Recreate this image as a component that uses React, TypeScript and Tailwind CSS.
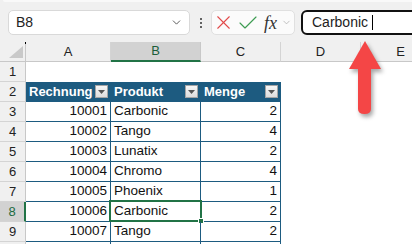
import React from "react";
import { ChevronDown, X, Check } from "lucide-react";

const rows = [
  { n: 3, a: "10001", b: "Carbonic", c: "2" },
  { n: 4, a: "10002", b: "Tango", c: "4" },
  { n: 5, a: "10003", b: "Lunatix", c: "2" },
  { n: 6, a: "10004", b: "Chromo", c: "4" },
  { n: 7, a: "10005", b: "Phoenix", c: "1" },
  { n: 8, a: "10006", b: "Carbonic", c: "2" },
  { n: 9, a: "10007", b: "Tango", c: "2" },
];

function FilterBtn() {
  return (
    <div className="w-[13px] h-[13px] mr-[2px] shrink-0 flex items-center justify-center border border-[#a5a5a5] bg-gradient-to-b from-[#f6f6f6] to-[#dedede]">
      <svg width="7" height="4" viewBox="0 0 7 4">
        <path d="M0 0 L7 0 L3.5 4 Z" fill="#555" />
      </svg>
    </div>
  );
}

function RowHeader({ n, selected }: { n?: number; selected?: boolean }) {
  return (
    <div
      className={
        "w-[26px] h-[20px] shrink-0 box-border flex items-center justify-center text-[13px] border-b border-b-[#d4d4d4] " +
        (selected
          ? "bg-[#d2d2d2] text-[#1b6b3f] border-r-2 border-r-[#217346]"
          : "bg-[#f0f0f0] text-[#222] border-r border-r-[#c8c8c8]")
      }
    >
      {n}
    </div>
  );
}

export default function App() {
  return (
    <div className="w-[412px] h-[244px] overflow-hidden bg-white relative font-['Liberation_Sans',Arial,sans-serif] text-[#111]">
      {/* Toolbar */}
      <div className="h-[42px] bg-[#f0f0f0] relative overflow-hidden">
        <div className="h-[2px] ml-[3px] bg-[#f9f9f9] rounded-bl-[4px]" />
        <div className="flex items-start pt-[8px] pl-[8px]">
          <div className="w-[182px] h-[25px] shrink-0 box-border bg-white border border-[#d9d9d9] rounded-[5px] flex items-center justify-between pl-[7px] pr-[6px]">
            <span className="text-[14px] text-[#222]">B8</span>
            <ChevronDown size={13} strokeWidth={1.6} color="#444" />
          </div>
          <div className="w-[21px] h-[25px] shrink-0 flex flex-col items-center justify-center gap-[2px]">
            <div className="w-[2px] h-[2px] bg-[#333] rounded-full" />
            <div className="w-[2px] h-[2px] bg-[#333] rounded-full" />
            <div className="w-[2px] h-[2px] bg-[#333] rounded-full" />
          </div>
          <div className="w-[84px] h-[25px] shrink-0 box-border bg-[#fbfbfb] border border-[#e0e0e0] rounded-[5px] flex items-center">
            <X size={23} strokeWidth={1.15} color="#e24a4a" className="shrink-0" />
            <Check size={24} strokeWidth={1.15} color="#3d9c52" className="ml-[1px] shrink-0" />
            <span className="ml-[4px] text-[18px] italic font-['Liberation_Serif',serif] text-[#333] leading-none">
              fx
            </span>
            <ChevronDown size={11} strokeWidth={1.5} color="#a8a8a8" className="ml-[4px] shrink-0" />
          </div>
          <div className="ml-[6px] w-[140px] h-[25px] box-border bg-white border-2 border-[#111] rounded-[6px] flex items-center pl-[9px] shrink-0">
            <span className="text-[14px] text-[#222]">Carbonic</span>
            <div className="w-[1px] h-[15px] bg-black ml-[4px]" />
          </div>
        </div>
      </div>

      {/* Column headers */}
      <div className="flex h-[20px] bg-[#f0f0f0] text-[13px] text-[#222]">
        <div className="w-[26px] shrink-0 box-border border-r border-r-[#c8c8c8] border-b border-b-[#c8c8c8] relative">
          <svg className="absolute left-[9px] top-[4px]" width="14" height="12" viewBox="0 0 14 12">
            <path d="M14 0 L14 12 L0 12 Z" fill="#c9c9c9" />
          </svg>
          <div className="absolute right-[-1px] top-0 w-[1px] h-[2px] bg-black" />
        </div>
        <div className="w-[85px] shrink-0 box-border border-r border-r-[#d4d4d4] border-b border-b-[#c8c8c8] flex items-center justify-center">A</div>
        <div className="w-[90px] shrink-0 box-border bg-[#d2d2d2] border-r border-r-[#c8c8c8] border-b-2 border-b-[#217346] flex items-center justify-center text-[#1b5e3a]">B</div>
        <div className="w-[80px] shrink-0 box-border border-r border-r-[#d4d4d4] border-b border-b-[#c8c8c8] flex items-center justify-center">C</div>
        <div className="w-[80px] shrink-0 box-border border-r border-r-[#d4d4d4] border-b border-b-[#c8c8c8] flex items-center justify-center">D</div>
        <div className="w-[80px] shrink-0 box-border border-r border-r-[#d4d4d4] border-b border-b-[#c8c8c8] flex items-center justify-center">E</div>
      </div>

      {/* Row 1 */}
      <div className="flex h-[20px]">
        <RowHeader n={1} />
        <div className="flex-1" />
      </div>

      {/* Row 2: table header */}
      <div className="flex h-[20px] text-[13px]">
        <RowHeader n={2} />
        <div className="w-[85px] shrink-0 box-border bg-[#1d5b80] border-r border-r-[#1d5b80] border-b border-b-[#1d5b80] flex items-center justify-between pl-[3px] text-white font-bold">
          <span>Rechnung</span>
          <FilterBtn />
        </div>
        <div className="w-[90px] shrink-0 box-border bg-[#1d5b80] border-r border-r-[#1d5b80] border-b border-b-[#1d5b80] flex items-center justify-between pl-[3px] text-white font-bold">
          <span>Produkt</span>
          <FilterBtn />
        </div>
        <div className="w-[80px] shrink-0 box-border bg-[#1d5b80] border-r border-r-[#1d5b80] border-b border-b-[#1d5b80] flex items-center justify-between pl-[3px] text-white font-bold">
          <span>Menge</span>
          <FilterBtn />
        </div>
      </div>

      {rows.map((r) => {
        const sel = r.n === 8;
        return (
          <div key={r.n} className="flex h-[20px] text-[13.5px] text-[#111]">
            <RowHeader n={r.n} selected={sel} />
            <div className="w-[85px] shrink-0 box-border border-r border-b border-[#1d5b80] flex items-center justify-end pr-[3px]">
              {r.a}
            </div>
            <div className="w-[90px] shrink-0 box-border border-r border-b border-[#1d5b80] flex items-center pl-[3px] relative">
              {r.b}
              {sel && (
                <>
                  <div className="absolute left-[-2px] top-[-2px] right-[-2px] bottom-[-1px] border-2 border-[#217346]" />
                  <div className="absolute right-[-4px] bottom-[-3px] w-[6px] h-[6px] bg-[#217346] border border-white" />
                </>
              )}
            </div>
            <div className="w-[80px] shrink-0 box-border border-r border-b border-[#1d5b80] flex items-center justify-end pr-[3px]">
              {r.c}
            </div>
          </div>
        );
      })}

      {/* Row 10 (mostly off-screen) */}
      <div className="flex h-[20px]">
        <RowHeader />
        <div className="w-[85px] shrink-0 box-border border-r border-[#1d5b80]" />
        <div className="w-[90px] shrink-0 box-border border-r border-[#1d5b80]" />
        <div className="w-[80px] shrink-0 box-border border-r border-[#1d5b80]" />
      </div>

      {/* Red arrow */}
      <svg
        className="absolute left-[340px] top-[36px] drop-shadow-[2px_3px_2px_rgba(0,0,0,0.35)]"
        width="48"
        height="84"
        viewBox="0 0 48 84"
      >
        <path d="M25 5 L41 33 L9 33 Z" fill="#f44646" />
        <path d="M18 31 L31 31 L31 73 Q31 78 24.5 78 Q18 78 18 73 Z" fill="#f44646" />
      </svg>
    </div>
  );
}
